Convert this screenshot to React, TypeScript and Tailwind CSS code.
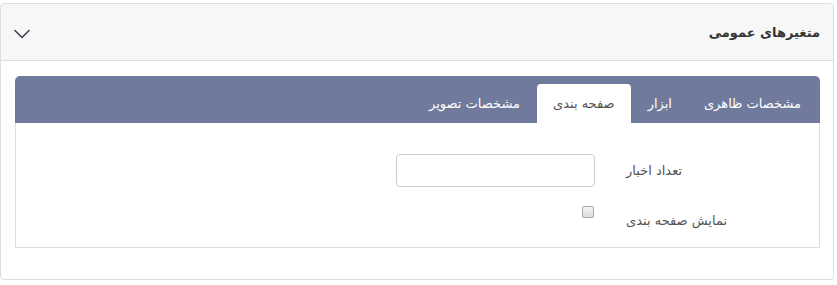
const tabs = ['مشخصات ظاهری', 'ابزار', 'صفحه بندی', 'مشخصات تصویر'];
const activeTab = 2;

const App = () => {
    return (
        <div className="w-[837px] h-[285px] bg-white pt-[3px] pr-[3px]" style={{ fontFamily: '"DejaVu Sans", sans-serif' }}>
            <div dir="rtl" className="h-[277px] border border-[#dddddd] rounded-[4px] bg-white flex flex-col">
                {/* header */}
                <div className="h-[57px] shrink-0 bg-[#f7f7f7] border-b border-[#dddddd] rounded-t-[4px] flex items-center justify-between pr-[13px] pl-[13px]">
                    <span className="text-[13px] font-bold text-[#333333] mt-[1px]">متغیرهای عمومی</span>
                    <svg width="16" height="10" viewBox="0 0 16 10" fill="none" className="mt-[3px]">
                        <path d="M1 1.5 L8 8.5 L15 1.5" stroke="#3b3f54" strokeWidth="1.6" strokeLinecap="round" strokeLinejoin="round" />
                    </svg>
                </div>

                {/* body */}
                <div className="pt-[15px] pr-[13px] pl-[14px]">
                    <div className="h-[47px] bg-[#6f7a9c] rounded-t-[5px] flex items-end pr-[4px]">
                        {tabs.map((tab, i) => (
                            <div
                                key={tab}
                                className={
                                    i === activeTab
                                        ? 'h-[39px] px-[16px] ml-[2px] bg-white rounded-t-[4px] flex items-center text-[13px] text-[#555555]'
                                        : 'h-[39px] px-[15px] ml-[2px] flex items-center text-[13px] text-white'
                                }
                            >
                                {tab}
                            </div>
                        ))}
                    </div>
                    <div className="h-[125px] border border-t-0 border-[#dddddd] pt-[31px]">
                        <div className="flex items-center">
                            <label className="w-[208px] pl-[15px] text-left text-[13px] text-[#555555]">تعداد اخبار</label>
                            <input
                                type="text"
                                className="mr-[16px] w-[199px] h-[33px] border border-[#cccccc] rounded-[4px] bg-white outline-none"
                            />
                        </div>
                        <div className="flex items-start mt-[15px]">
                            <label className="w-[208px] pl-[15px] text-left text-[13px] text-[#555555] leading-[34px] mt-[2px]">نمایش صفحه بندی</label>
                            <div className="mr-[17px] mt-[4px] w-[12px] h-[12px] rounded-[2px] border border-[#a9a9a9] bg-gradient-to-b from-[#f4f4f4] to-[#dcdcdc]" />
                        </div>
                    </div>
                </div>
            </div>
        </div>
    );
};

export default App;
